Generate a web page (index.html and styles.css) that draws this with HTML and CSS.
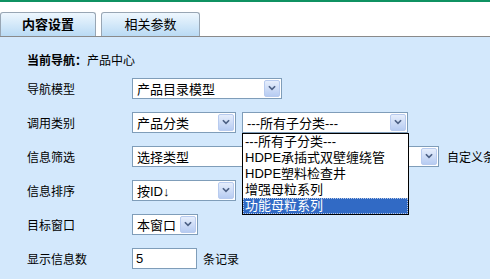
FILE: index.html
```html
<!DOCTYPE html>
<html lang="zh-CN">
<head>
    <meta charset="UTF-8">
    <title>内容设置</title>
    <link rel="stylesheet" href="styles.css">
</head>
<body>
    <div class="topline"></div>
    <div class="tabs">
        <div class="tab active">内容设置</div>
        <div class="tab">相关参数</div>
    </div>
    <div class="panel">
        <div class="nav"><b>当前导航：</b>产品中心</div>

        <div class="row">
            <span class="label">导航模型</span>
            <div class="select w-model"><span class="val">产品目录模型</span><span class="arrow"><svg viewBox="0 0 9 6"><polyline points="1,1 4.5,4.5 8,1"/></svg></span></div>
        </div>

        <div class="row">
            <span class="label">调用类别</span>
            <div class="select w-cat"><span class="val">产品分类</span><span class="arrow"><svg viewBox="0 0 9 6"><polyline points="1,1 4.5,4.5 8,1"/></svg></span></div>
            <div class="combo">
                <div class="select w-sub"><span class="val">---所有子分类---</span><span class="arrow"><svg viewBox="0 0 9 6"><polyline points="1,1 4.5,4.5 8,1"/></svg></span></div>
                <ul class="droplist">
                    <li>---所有子分类---</li>
                    <li>HDPE承插式双壁缠绕管</li>
                    <li>HDPE塑料检查井</li>
                    <li>增强母粒系列</li>
                    <li class="hl"><span>功能母粒系列</span></li>
                </ul>
            </div>
        </div>

        <div class="row">
            <span class="label">信息筛选</span>
            <div class="select w-filter"><span class="val">选择类型</span><span class="arrow"><svg viewBox="0 0 9 6"><polyline points="1,1 4.5,4.5 8,1"/></svg></span></div>
            <span class="note wide">自定义条件</span>
        </div>

        <div class="row">
            <span class="label">信息排序</span>
            <div class="select w-order"><span class="val">按ID↓</span><span class="arrow"><svg viewBox="0 0 9 6"><polyline points="1,1 4.5,4.5 8,1"/></svg></span></div>
        </div>

        <div class="row">
            <span class="label">目标窗口</span>
            <div class="select w-target"><span class="val">本窗口</span><span class="arrow"><svg viewBox="0 0 9 6"><polyline points="1,1 4.5,4.5 8,1"/></svg></span></div>
        </div>

        <div class="row">
            <span class="label">显示信息数</span>
            <div class="input">5</div>
            <span class="note">条记录</span>
        </div>
    </div>
</body>
</html>
```

FILE: styles.css
```css
* {
    margin: 0;
    padding: 0;
    box-sizing: border-box;
}

body {
    width: 490px;
    height: 279px;
    overflow: hidden;
    background-color: #fff;
    color: #000;
    font-family: "Liberation Sans", "Noto Sans CJK SC", sans-serif;
    font-size: 12px;
}

.topline {
    height: 2px;
    background-color: #0f9262;
}

.tabs {
    display: flex;
    align-items: flex-end;
    gap: 5px;
    height: 35px;
    border-bottom: 1px solid #8a8a8a;
}

.tab {
    width: 99px;
    height: 24px;
    line-height: 23px;
    text-align: center;
    font-size: 13px;
    border: 1px solid #98a6b4;
    border-bottom: none;
    border-radius: 3px 3px 0 0;
    background: linear-gradient(#eef7fe, #b9daf4);
}

.tab.active {
    width: 96px;
    font-weight: bold;
}

.panel {
    height: 242px;
    background-color: #d3e8fc;
    padding: 15px 0 0 27px;
    overflow: hidden;
}

.nav {
    height: 19px;
    line-height: 19px;
}

.row {
    display: flex;
    align-items: center;
    height: 34px;
}

.row > * {
    flex-shrink: 0;
}

.label {
    width: 105px;
}

.select {
    display: flex;
    align-items: center;
    height: 21px;
    border: 1px solid #7f9db9;
    background-color: #fff;
    font-size: 13px;
}

.select .val {
    flex: 1;
    padding-left: 4px;
    white-space: nowrap;
    overflow: hidden;
}

.arrow {
    display: flex;
    align-items: center;
    justify-content: center;
    width: 16px;
    height: 17px;
    margin-right: 1px;
    border: 1px solid #b8cbef;
    border-radius: 2px;
    background: linear-gradient(#e6eefc, #b7ccf2);
}

.arrow svg {
    width: 8px;
    height: 6px;
    fill: none;
    stroke: #4d6185;
    stroke-width: 1.9;
}

.w-model { width: 150px; }
.w-cat { width: 104px; }
.w-sub { width: 166px; }
.w-filter { width: 307px; }
.w-order { width: 104px; }
.w-target { width: 66px; }

.combo {
    position: relative;
    margin-left: 6px;
}

.droplist {
    position: absolute;
    top: 21px;
    left: 0;
    width: 167px;
    list-style: none;
    background-color: #fff;
    border: 1px solid #000;
    font-size: 13px;
    z-index: 2;
}

.droplist li {
    height: 16px;
    line-height: 16px;
    padding-left: 2px;
    white-space: nowrap;
}

.droplist li.hl {
    background-color: #316ac5;
    color: #fff;
    padding: 0;
}

.droplist li.hl span {
    display: block;
    height: 16px;
    line-height: 14px;
    padding-left: 1px;
    border: 1px dotted #b9c9e6;
}

.note {
    margin-left: 6px;
}

.note.wide {
    margin-left: 8px;
    white-space: nowrap;
}

.input {
    width: 65px;
    height: 21px;
    line-height: 19px;
    padding-left: 3px;
    border: 1px solid #7f9db9;
    background-color: #fff;
    font-size: 13px;
}
```
